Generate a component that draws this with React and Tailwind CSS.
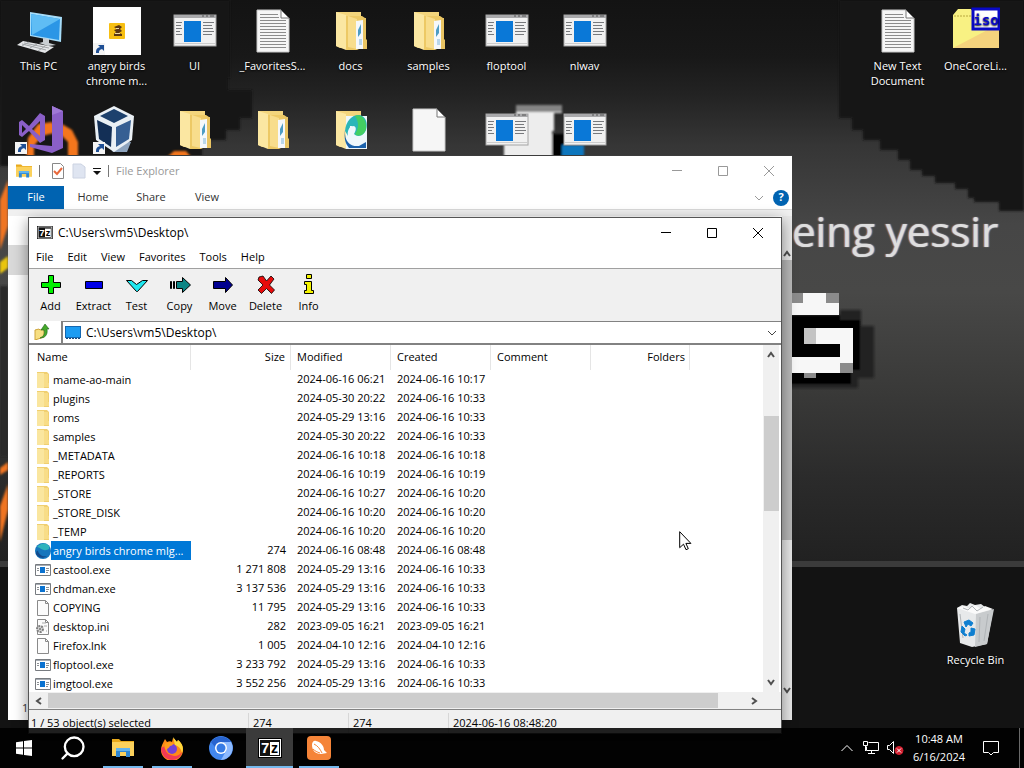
import React, { useState } from 'react';
import { Search } from 'lucide-react';

const desktopIcons = [
  { id: 'pc', label: 'This PC', kind: 'pc', x: 0, y: 7 },
  { id: 'angry', label: 'angry birds chrome m...', kind: 'game', x: 78, y: 7 },
  { id: 'ui', label: 'UI', kind: 'app', x: 156, y: 7 },
  { id: 'fav', label: '_FavoritesS...', kind: 'text', x: 234, y: 7 },
  { id: 'docs', label: 'docs', kind: 'folder', x: 312, y: 7 },
  { id: 'samples', label: 'samples', kind: 'folder', x: 390, y: 7 },
  { id: 'floptool', label: 'floptool', kind: 'app', x: 468, y: 7 },
  { id: 'nlwav', label: 'nlwav', kind: 'app', x: 546, y: 7 },
  { id: 'newtext', label: 'New Text Document', kind: 'text', x: 859, y: 7 },
  { id: 'onecore', label: 'OneCoreLi...', kind: 'iso', x: 937, y: 7 },
  { id: 'vs', kind: 'vs', x: 0, y: 106 },
  { id: 'vbox', kind: 'vbox', x: 78, y: 106 },
  { id: 'folder1', kind: 'folder', x: 156, y: 106 },
  { id: 'folder2', kind: 'folder', x: 234, y: 106 },
  { id: 'edge', kind: 'edgeFolder', x: 312, y: 106 },
  { id: 'blank', kind: 'blank', x: 390, y: 106 },
  { id: 'app1', kind: 'app', x: 468, y: 106 },
  { id: 'app2', kind: 'app', x: 546, y: 106 },
  { id: 'bin', label: 'Recycle Bin', kind: 'bin', x: 937, y: 601 },
];

const files = [
  { name: 'mame-ao-main', icon: 'folder', size: '', modified: '2024-06-16 06:21', created: '2024-06-16 10:17' },
  { name: 'plugins', icon: 'folder', size: '', modified: '2024-05-30 20:22', created: '2024-06-16 10:33' },
  { name: 'roms', icon: 'folder', size: '', modified: '2024-05-29 13:16', created: '2024-06-16 10:33' },
  { name: 'samples', icon: 'folder', size: '', modified: '2024-05-30 20:22', created: '2024-06-16 10:33' },
  { name: '_METADATA', icon: 'folder', size: '', modified: '2024-06-16 10:18', created: '2024-06-16 10:18' },
  { name: '_REPORTS', icon: 'folder', size: '', modified: '2024-06-16 10:19', created: '2024-06-16 10:19' },
  { name: '_STORE', icon: 'folder', size: '', modified: '2024-06-16 10:27', created: '2024-06-16 10:20' },
  { name: '_STORE_DISK', icon: 'folder', size: '', modified: '2024-06-16 10:20', created: '2024-06-16 10:20' },
  { name: '_TEMP', icon: 'folder', size: '', modified: '2024-06-16 10:20', created: '2024-06-16 10:20' },
  { name: 'angry birds chrome mlg...', icon: 'edge', size: '274', modified: '2024-06-16 08:48', created: '2024-06-16 08:48' },
  { name: 'castool.exe', icon: 'exe', size: '1 271 808', modified: '2024-05-29 13:16', created: '2024-06-16 10:33' },
  { name: 'chdman.exe', icon: 'exe', size: '3 137 536', modified: '2024-05-29 13:16', created: '2024-06-16 10:33' },
  { name: 'COPYING', icon: 'file', size: '11 795', modified: '2024-05-29 13:16', created: '2024-06-16 10:33' },
  { name: 'desktop.ini', icon: 'ini', size: '282', modified: '2023-09-05 16:21', created: '2023-09-05 16:21' },
  { name: 'Firefox.lnk', icon: 'file', size: '1 005', modified: '2024-04-10 12:16', created: '2024-04-10 12:16' },
  { name: 'floptool.exe', icon: 'exe', size: '3 233 792', modified: '2024-05-29 13:16', created: '2024-06-16 10:33' },
  { name: 'imgtool.exe', icon: 'exe', size: '3 552 256', modified: '2024-05-29 13:16', created: '2024-06-16 10:33' },
];

const tools = ['Add', 'Extract', 'Test', 'Copy', 'Move', 'Delete', 'Info'];

// ---------- icons ----------

const ShortcutArrow = () => (
  <g>
    <rect x="0" y="36" width="12" height="12" fill="#f4f4f4" />
    <path d="M3 46c0-4 1-5 4-6l-2-2h6v6l-2-2c-3 1-3 2-3 4z" fill="#1f4f94" />
  </g>
);

const FolderShape = () => (
  <g>
    <path d="M9 5h25v36H13l-4-2z" fill="#f3d57c" />
    <path d="M9 5l10 3v35l-10-4z" fill="#fbe7a2" />
    <path d="M19 9h16l3 2v28l-8 4H19z" fill="#edc965" />
    <path d="M21 9l9 3v30l-9-2z" fill="#f8dd8c" />
    <path d="M29 14l7-1v29h-7z" fill="#f5f8fb" />
    <path d="M31 23l3-6v9l-3 4z" fill="#4d9cc4" />
    <path d="M32 32h3v6h-3z" fill="#b9d6ea" />
    <path d="M36 11h3v21l1 1v9h-4z" fill="#e9c463" />
  </g>
);

const DesktopGlyph = ({ kind }) => (
  <svg viewBox="0 0 48 48" className="size-12 shrink-0" aria-hidden="true">
    {kind === 'pc' && (
      <g>
        <path d="M15 5l32 5-1 25-31-6z" fill="#a6dcf8" />
        <path d="M16 7l29 5-1 21-28-5z" fill="#2b96e6" />
        <path d="M16 7l29 5-28 16z" fill="#5fbdf4" />
        <path d="M28 31l6 1v4l7 2-8 1-9-3 4-1z" fill="#c9ced2" />
        <path d="M8 34l31 6-9 6-28-8z" fill="#e4e6e8" />
        <path d="M9 36l25 5M7 37l24 6M14 35l-7 4M22 37l-7 4M30 39l-7 5" stroke="#a2a6a9" fill="none" />
      </g>
    )}
    {kind === 'game' && (
      <g>
        <rect width="48" height="48" fill="#fff" />
        <rect x="16" y="16" width="16" height="16" rx="1" fill="#f7bf12" />
        <path d="M21 20l5-2 3 2-2 2 2 2-3 2 3 1v2h-8v-2l2-2-2-2 3-1z" fill="#5a3612" />
        <path d="M23 21h3v1h-3zM22 26h5v1h-5z" fill="#f0d9a6" />
        <ShortcutArrow />
      </g>
    )}
    {kind === 'app' && (
      <g>
        <rect x="3" y="8" width="42" height="31" fill="#f1f1f1" stroke="#a4a4a4" />
        <rect x="3" y="8" width="42" height="3" fill="#a9a9ab" />
        <path d="M31 9h2M35 9h2M39 9h4" stroke="#555" />
        <rect x="13" y="14" width="17" height="21" fill="#0a78d7" />
        <path d="M5 15.500h6M5 18.500h5M5 21.500h6M5 24.500h4M5 27.500h6M32 15.500h11M32 18.500h9M32 21.500h10M32 24.500h11M32 27.500h9" stroke="#77797c" />
        <path d="M4 36.500h40" stroke="#cdcdcd" />
      </g>
    )}
    {(kind === 'text' || kind === 'blank') && (
      <g>
        <path d="M8 3h24l8 8v34H8z" fill="#f6f6f6" stroke="#c8c8c8" />
        <path d="M32 3v8h8z" fill="#fff" stroke="#777" />
        {kind === 'text' && (
          <path
            d="M11 7.500h18M11 10.500h19M11 13.500h26M11 16.500h26M11 19.500h26M11 22.500h26M11 25.500h26M11 28.500h26M11 31.500h26M11 34.500h26M11 37.500h26M11 40.500h26"
            stroke="#8c8c8c"
          />
        )}
      </g>
    )}
    {kind === 'folder' && <FolderShape />}
    {kind === 'edgeFolder' && (
      <g>
        <path d="M9 5h25v36H13l-4-2z" fill="#f3d57c" />
        <path d="M9 5l10 3v35l-10-4z" fill="#fbe7a2" />
        <path d="M19 10h21v33H19z" fill="#eef7fb" />
        <path d="M18 25c1-11 8-17 15-16 6 2 8 8 6 15-3 7-9 7-12 4 3-5 2-8-1-8-4 1-6 5-5 10z" fill="#2ab6b8" />
        <path d="M28 10c7-3 12 5 11 13-2 7-8 8-11 5 4-6 4-12 0-18z" fill="#43cf62" />
        <path d="M18 24c-1 12 6 17 14 16l7-4v6H22c-4-5-5-10-4-18z" fill="#1b62ac" />
        <path d="M22 30c2 5 6 7 11 6M24 20l-1 8" stroke="#eef7fb" strokeWidth="2" fill="none" />
      </g>
    )}
    {kind === 'iso' && (
      <g>
        <path d="M1 8l5-6h13l2 3h26v36H1z" fill="#f8f183" />
        <path d="M1 41l46-24v24z" fill="#f5d37d" />
        <path d="M2 9h18" stroke="#b8a83f" strokeDasharray="2 1" />
        <rect x="21" y="2" width="26" height="20" fill="#fff" stroke="#0909c6" strokeWidth="3" />
        <text x="34" y="18" textAnchor="middle" fontFamily="DejaVu Sans Mono, monospace" fontWeight="700" fontSize="14" fill="#0909c6">
          iso
        </text>
      </g>
    )}
    {kind === 'vs' && (
      <g>
        <path d="M37 0l11 5v37l-11 5-22-6v-3l22 2z" fill="#8a5fc7" />
        <path d="M37 0l11 5-11 4z" fill="#9f78d6" />
        <path
          d="M4 16l3-2 7 6L25 7l5 3v24l-5 3-11-12-7 6-3-2zM7 19v8l4-4zM25 15l-8 8 8 7z"
          fillRule="evenodd"
          fill="#8a5fc7"
        />
        <ShortcutArrow />
      </g>
    )}
    {kind === 'vbox' && (
      <g>
        <path d="M14 37l24-1-4 10H20z" fill="#8ea4be" />
        <path d="M21 0l20 10-2 24-18 12L3 34 1 10z" fill="#eaf0f5" />
        <path d="M21 3l14 7-14 7-14-7z" fill="#1d416d" />
        <path d="M4 14l15 7-1 20-12-8z" fill="#132f56" />
        <path d="M38 14l-15 7v20l13-8z" fill="#365f93" />
        <ShortcutArrow />
      </g>
    )}
    {kind === 'bin' && (
      <g>
        <path d="M5 7l5-3 5 1 3-3 5 2 6-1 4 3 8 3-6 34-15 3-12-4z" fill="#e7e9ea" />
        <path d="M24 13l18-5-7 35-12 3z" fill="#c8cbcd" />
        <path d="M5 7l18 6 18-5-8-3-4 3-6-4-5 4-6-3z" fill="#fafafa" />
        <path d="M11 7l5 2 4-4 5 5 6-4M8 13l3 24M28 16l-1 25M36 13l-4 27" stroke="#b0b4b7" fill="none" />
        <path d="M12 21l5-2 4 3-2 3-3-2-2 3zM10 25l3 3-1 4 3 2-2 1-4-4zM19 27l4 1-1 6-5 1v-3l2-1z" fill="#0f7fd0" stroke="#0f7fd0" />
      </g>
    )}
  </svg>
);

const FileGlyph = ({ kind }) => (
  <svg viewBox="0 0 16 16" className="size-4 shrink-0" aria-hidden="true">
    {kind === 'folder' && (
      <g>
        <path d="M2 0h10l2 2v14H2z" fill="#f0cf70" />
        <path d="M2 1h7v15H2z" fill="#fae69f" />
        <path d="M9 2h4v9h1v4H9z" fill="#f8dd88" />
      </g>
    )}
    {kind === 'edge' && (
      <g>
        <circle cx="8" cy="8" r="8" fill="#1676bd" />
        <path d="M2 4c3-4 9-5 12-1 1 2 0 4-3 4-3 1-5-2-9-3z" fill="#2fb3bd" />
        <path d="M3 8c1 4 5 6 9 5-4 3-9 2-11-2 0-2 1-4 2-3z" fill="#124b8d" />
      </g>
    )}
    {kind === 'exe' && (
      <g>
        <path d="M.5 2.500h15v11H.5z" fill="#fff" stroke="#777b80" />
        <path d="M1 3h14v1H1z" fill="#a5abb2" />
        <path d="M5 5h5v6H5z" fill="#0a72d0" />
        <path d="M2 6.500h2M2 8.500h2M11 6.500h3M11 8.500h3M11 10.500h2" stroke="#8b8f93" />
      </g>
    )}
    {(kind === 'file' || kind === 'ini') && (
      <g>
        <path d="M2.500.5h8l3 3v12h-11z" fill="#fcfcfc" stroke="#8a8a8a" />
        <path d="M10.500.5v3h3" fill="none" stroke="#8a8a8a" />
      </g>
    )}
    {kind === 'ini' && (
      <g>
        <path d="M7 4h4M9 7h3M11 12h1" stroke="#aaa" />
        <circle cx="5" cy="10" r="3" fill="#d5d5d5" stroke="#7f7f7f" strokeWidth="2" strokeDasharray="2 1" />
        <circle cx="5" cy="10" r="1" fill="#777" />
      </g>
    )}
  </svg>
);

const ToolGlyph = ({ name }) => (
  <svg viewBox="0 0 24 24" className="size-6" aria-hidden="true" stroke="#000">
    {name === 'Add' && <path d="M9.500 2.500h5v7h7v5h-7v6h-5v-6h-7v-5h7z" fill="#00f000" />}
    {name === 'Extract' && <path d="M3.500 8.500h17v7h-17z" fill="#0000e8" />}
    {name === 'Test' && <path d="M1.500 7.500h5l5 4 6-4h5l-10 11h-1z" fill="#1fe8f0" />}
    {name === 'Copy' && <path d="M2.500 8.500h1v7h-1zM5.500 8.500h1v7h-1zM8.500 8.500h6v-4l8 7.500-8 7.500v-4h-6z" fill="#0b8585" />}
    {name === 'Move' && <path d="M2.500 8.500h12v-4l7 7.500-7 7.500v-4h-12z" fill="#000090" />}
    {name === 'Delete' && (
      <path d="M5 4l4-1 3.500 5L17 3l3 3-4.500 6 5 5-3 3.500-5-5-5 5L4 17l5-5-5-5z" fill="#e80c0c" strokeWidth=".8" />
    )}
    {name === 'Info' && (
      <path d="M9.500 1.500h5v4h-5zM7.500 8.500h7v9h2v3h-9v-3h2v-6h-2z" fill="#f4f400" />
    )}
  </svg>
);

const SevenZip = ({ className }) => (
  <svg viewBox="0 0 24 20" className={className} aria-hidden="true">
    <rect x=".5" y=".5" width="23" height="19" fill="#111" stroke="#000" />
    <rect x="1.500" y="1.500" width="21" height="17" fill="none" stroke="#fff" />
    <rect x="12" y="4" width="9" height="13" fill="#fff" />
    <text x="3" y="15" fontFamily="Liberation Sans, sans-serif" fontWeight="700" fontSize="15" fill="#fff">7</text>
    <text x="13" y="15" fontFamily="Liberation Sans, sans-serif" fontWeight="700" fontSize="14" fill="#000">z</text>
  </svg>
);

const ExplorerGlyph = ({ className }) => (
  <svg viewBox="0 0 22 18" className={className} aria-hidden="true">
    <path d="M0 0h7l2 2h13v3H0z" fill="#e8a91c" />
    <path d="M0 3h22v14H0z" fill="#fbd15c" />
    <path d="M4 18V9h14v9h-4v-5H8v5z" fill="#2f87d2" />
    <path d="M4 9h14v3H4z" fill="#62b4ee" />
  </svg>
);

const Chevron = ({ dir, thin }) => {
  const paths = {
    up: 'M3 8l3-4 3 4',
    down: 'M3 4l3 4 3-4',
    left: 'M8 3L4 6l4 3',
    right: 'M4 3l4 3-4 3',
  };
  return (
    <svg viewBox="0 0 12 12" className="size-3" fill="none" stroke="currentColor" strokeWidth={thin ? 1 : 2} aria-hidden="true">
      <path d={thin ? 'M2 4l4 4 4-4' : paths[dir]} />
    </svg>
  );
};

const WindowButtons = ({ muted }) => (
  <div className={`flex h-full ${muted ? 'text-[#999999]' : 'text-black'}`}>
    {['M1 5.500h10', 'M1.500 1.500h9v9h-9z', 'M1 1l10 10M11 1L1 11'].map((d, i) => (
      <button key={i} aria-label={['Minimize', 'Maximize', 'Close'][i]} className="flex w-[46px] items-center justify-center">
        <svg viewBox="0 0 12 12" className="size-3" fill="none" stroke="currentColor">
          <path d={d} />
        </svg>
      </button>
    ))}
  </div>
);

// ---------- wallpaper ----------

const Wallpaper = () => (
  <div className="absolute inset-0 overflow-hidden bg-[#131313]">
    <svg viewBox="0 0 1024 768" preserveAspectRatio="none" className="h-full w-full" aria-hidden="true">
      <defs>
        <linearGradient id="haze" x1="0" y1="0" x2="0" y2="1">
          <stop offset="0" stopColor="#131313" />
          <stop offset=".1" stopColor="#181818" />
          <stop offset=".17" stopColor="#232323" />
          <stop offset=".26" stopColor="#363636" />
          <stop offset=".4" stopColor="#464646" />
          <stop offset=".52" stopColor="#484847" />
          <stop offset=".7" stopColor="#393938" />
          <stop offset=".85" stopColor="#2b2b2b" />
          <stop offset="1" stopColor="#212121" />
        </linearGradient>
        <filter id="soft">
          <feGaussianBlur stdDeviation="1" />
        </filter>
      </defs>
      <rect width="1024" height="562" fill="url(#haze)" />
      <path
        d="M839 60V118h13v12h11v10h17v10h18v10h12v10h12v6h13v7h20v6h13v9h6v4h25v9h25V0H839z"
        fill="#131313"
        filter="url(#soft)"
      />
      <path d="M0 0h230v78h-2v12h24v28h-12v12h-14v10h-24v26H0z" fill="#131313" filter="url(#soft)" />
      <rect y="561" width="1024" height="6" fill="#3b3b3b" />
      <rect y="567" width="1024" height="201" fill="#131313" />
      <path d="M26 160l2-22 10-14 14-2 6 10-16 4-8 10v14zM62 124l10 6 6 12v16H68v-16l-8-8zM166 158l8-7h12l6 7z" fill="#f4761e" filter="url(#soft)" />
      <g filter="url(#soft)">
        <path d="M0 200l8-20v46l-8 24zM0 468l8-6v8l-8 5zM0 506l8-22v26l-8 32z" fill="#ef7420" />
        <path d="M0 262l8-6v12l-8 6z" fill="#e9c511" />
        <path d="M0 286h8v170H0z" fill="#2a2a2a" />
        <path d="M516 105h46v8h-8v18h-2v30h-48v-25h12z" fill="#ededed" />
        <path d="M516 105h46v7h-46z" fill="#858585" />
        <path d="M552 134h12v24h-12z" fill="#000" />
        <path d="M562 145h22v14h-22z" fill="#0876bd" />
        <path d="M840 310h21v16h13v52h-16v10h-78v-12h60z" fill="#242424" />
        <path d="M780 315h60v5h20v50h-9v14h-71z" fill="#030303" />
      </g>
      <path d="M780 293h59v22h-59zM804 328h49v45h-73v-16h60v-13h-36z" fill="#f7f7f7" />
      <path d="M780 293h23v10h-23zM826 293h13v10h-13zM840 363h13v10h-13zM804 373h12v5h-12z" fill="#8b8b8b" />
      <path d="M804 328h12v16h-12z" fill="#c4c4c4" />
    </svg>
    <p className="absolute top-[202px] left-[792px] font-['Open_Sans',sans-serif] text-[42px] leading-[58px] whitespace-nowrap text-[#dedede] [text-shadow:1px_0_1px_#8fa9c4,-1px_0_1px_#b98f68]">
      eing yessir
    </p>
  </div>
);

// ---------- windows ----------

const ExplorerWindow = () => (
  <section className="absolute top-[155px] bottom-12 left-2 flex w-[784px] flex-col border-t border-[#3c3c3c] bg-white text-[11px] text-[#333333]">
    <header className="flex h-[30px] shrink-0 items-center justify-between">
      <div className="flex items-center gap-[7px] pl-2">
        <ExplorerGlyph className="h-[14px] w-4" />
        <span className="h-3 w-px bg-[#777777]" />
        <svg viewBox="0 0 14 16" className="ml-1 h-4 w-[14px]" fill="none" aria-hidden="true">
          <path d="M1.500.5h8l3 3v12h-11z" stroke="#888" />
          <path d="M3 8l3 3 5-6" stroke="#e8693c" strokeWidth="2" />
        </svg>
        <svg viewBox="0 0 14 16" className="h-4 w-[14px]" aria-hidden="true">
          <path d="M1 1h8l4 3v11H1z" fill="#dfe5f1" stroke="#ccd3e2" />
        </svg>
        <svg viewBox="0 0 8 8" className="size-2" aria-hidden="true">
          <path d="M0 1h8v1H0zM0 4h8L4 8z" fill="#111" />
        </svg>
        <span className="h-3 w-px bg-[#777777]" />
        <h2 className="text-[#999999]">File Explorer</h2>
      </div>
      <WindowButtons muted />
    </header>
    <nav className="flex h-6 shrink-0 items-stretch border-b border-[#d9d9d9]">
      <button className="w-14 bg-[#0063b1] text-white">File</button>
      <button className="w-[58px]">Home</button>
      <button className="w-[58px]">Share</button>
      <button className="w-[54px]">View</button>
      <div className="ml-auto flex items-center gap-2 pr-[3px] text-[#999999]">
        <Chevron thin />
        <button aria-label="Help" className="flex size-4 items-center justify-center rounded-full bg-[#0063b1] text-[11px] font-bold text-white">
          ?
        </button>
      </div>
    </nav>
    <div className="flex min-h-0 flex-1 justify-between border-t-6 border-[#f0f0f0]">
      <div className="flex w-5 flex-col justify-between">
        <div className="mt-[29px] h-[30px] bg-[#d9d9d9]" />
        <p className="h-5 pl-[14px]">1</p>
      </div>
      <div className="flex w-[10px] flex-col items-center bg-[#e9e9e9] pt-8 pb-6 text-[#505050]">
        <Chevron dir="up" />
        <div className="h-[280px] w-full bg-[#b9b9b9]" />
        <div className="mt-auto">
          <Chevron dir="down" />
        </div>
      </div>
    </div>
  </section>
);

const SevenZipWindow = () => {
  const [selected, setSelected] = useState('angry birds chrome mlg...');

  return (
    <section className="absolute top-[217px] bottom-[34px] left-7 flex w-[754px] flex-col border border-[#555555] bg-white text-[11px] text-black shadow-[0_4px_14px_rgba(0,0,0,0.45)]">
      <header className="flex h-[29px] shrink-0 items-center justify-between">
        <div className="flex items-center gap-[5px] pl-2">
          <SevenZip className="h-[13px] w-4" />
          <h1 className="text-[12px]">C:\Users\vm5\Desktop\</h1>
        </div>
        <WindowButtons />
      </header>

      <nav className="flex h-[22px] shrink-0 items-center border-b border-[#a0a0a0]">
        {['File', 'Edit', 'View', 'Favorites', 'Tools', 'Help'].map((item) => (
          <button key={item} className="px-[7px]">{item}</button>
        ))}
      </nav>

      <div className="flex h-[52px] shrink-0 bg-[#f0f0f0]">
        {tools.map((name) => (
          <button key={name} className="flex w-[43px] flex-col items-center pt-1 leading-[18px]">
            <ToolGlyph name={name} />
            {name}
          </button>
        ))}
      </div>

      <div className="flex h-6 shrink-0 items-stretch border-b-2 border-[#828282]">
        <button aria-label="Up one level" className="flex w-8 items-center pl-[5px]">
          <svg viewBox="0 0 16 16" className="size-4">
            <path d="M1 6l4-1 1 1 4-1v8l-9 3z" fill="#f7df82" stroke="#cda43a" />
            <path d="M6 14c4-2 5-4 4-8H7l4-6 4 5h-2c1 6-2 9-7 9z" fill="#45a82a" stroke="#1e651a" strokeWidth=".6" />
          </svg>
        </button>
        <div className="relative flex flex-1 items-center border-t border-l-2 border-[#828282] pl-[2px]">
          <svg viewBox="0 0 16 13" className="h-[13px] w-4" aria-hidden="true">
            <rect x=".5" y=".5" width="15" height="11" fill="#1c9cf2" stroke="#1467b0" />
            <path d="M1 12.500h14" stroke="#174a7a" strokeDasharray="2 1" />
          </svg>
          <select aria-label="Folder path" className="h-full flex-1 appearance-none pl-[5px] text-[12px]">
            <option>C:\Users\vm5\Desktop\</option>
          </select>
          <span className="pointer-events-none absolute right-[3px] text-[#444444]">
            <Chevron thin />
          </span>
        </div>
      </div>

      <div className="flex min-h-0 flex-1">
        <div className="min-w-0 flex-1 overflow-hidden">
          <table className="w-[661px] table-fixed border-separate border-spacing-0 whitespace-nowrap">
            <thead>
              <tr className="h-[25px]">
                <th className="w-[162px] border-r border-[#e5e5e5] p-0 pl-2 text-left font-normal">Name</th>
                <th className="w-[100px] border-r border-[#e5e5e5] p-0 pr-[5px] text-right font-normal">Size</th>
                <th className="w-[100px] border-r border-[#e5e5e5] p-0 pl-[6px] text-left font-normal">Modified</th>
                <th className="w-[100px] border-r border-[#e5e5e5] p-0 pl-[6px] text-left font-normal">Created</th>
                <th className="w-[100px] border-r border-[#e5e5e5] p-0 pl-[6px] text-left font-normal">Comment</th>
                <th className="border-r border-[#e5e5e5] p-0 pr-1 text-right font-normal">Folders</th>
              </tr>
            </thead>
            <tbody>
              {files.map((f) => (
                <tr key={f.name} className="h-[19px]" onClick={() => setSelected(f.name)}>
                  <td className="p-0 pl-[6px]">
                    <div className="flex h-[19px] items-center">
                      <FileGlyph kind={f.icon} />
                      <span className={`pl-[2px] leading-[19px] ${selected === f.name ? 'flex-1 bg-[#0078d7] text-white' : ''}`}>
                        {f.name}
                      </span>
                    </div>
                  </td>
                  <td className="p-0 pr-[5px] text-right">{f.size}</td>
                  <td className="p-0 pl-[6px]">{f.modified}</td>
                  <td className="p-0 pl-[6px]">{f.created}</td>
                  <td />
                  <td />
                </tr>
              ))}
            </tbody>
          </table>
        </div>
        <div className="mr-[2px] flex w-4 flex-col items-center bg-[#f0f0f0] py-1 text-[#505050]">
          <Chevron dir="up" />
          <div className="mt-[55px] h-[95px] w-[15px] bg-[#cdcdcd]" />
          <div className="mt-auto">
            <Chevron dir="down" />
          </div>
        </div>
      </div>

      <div className="flex h-[17px] shrink-0 items-center bg-[#f0f0f0] pr-[21px] pl-1 text-[#505050]">
        <Chevron dir="left" />
        <div className="mr-[30px] ml-[3px] h-[15px] flex-1 bg-[#cdcdcd]" />
        <Chevron dir="right" />
      </div>

      <footer className="flex h-6 shrink-0 items-center border-t border-[#828282] bg-[#f0f0f0] pt-0.5 leading-5">
        <span className="w-[219px] pl-[2px]">1 / 53 object(s) selected</span>
        <span className="w-[100px] border-l border-[#d7d7d7] pl-1">274</span>
        <span className="w-[100px] border-l border-[#d7d7d7] pl-1">274</span>
        <span className="flex-1 border-l border-[#d7d7d7] pl-1">2024-06-16 08:48:20</span>
      </footer>
    </section>
  );
};

// ---------- taskbar ----------

const Taskbar = () => (
  <footer className="absolute inset-x-0 bottom-0 flex h-10 items-stretch justify-between bg-black/87 text-white">
    <div className="flex">
      <button aria-label="Start" className="flex w-12 items-center justify-center">
        <svg viewBox="0 0 16 16" className="size-4" fill="#fff">
          <path d="M0 2.300l7-1v6.200H0zM8 1.100L16 0v7.500H8zM0 8.500h7v6.200l-7-1zM8 8.500h8V16l-8-1.100z" />
        </svg>
      </button>
      <button aria-label="Search" className="flex w-[50px] items-center justify-center">
        <Search className="size-7 -scale-x-100" strokeWidth={2} />
      </button>
      <button aria-label="File Explorer" className="flex w-[49px] items-center justify-center">
        <span className="flex h-full w-10 items-center justify-center border-y-2 border-t-transparent border-b-[#76b9ed]">
          <ExplorerGlyph className="h-[18px] w-[22px]" />
        </span>
      </button>
      <button aria-label="Firefox" className="flex w-[49px] items-center justify-center">
        <span className="flex h-full w-10 items-center justify-center border-y-2 border-t-transparent border-b-[#76b9ed]">
          <svg viewBox="0 0 24 24" className="size-6">
            <path d="M3 7l2-4 2 3c2-1 4-1 5 0l1-4 4 4 1-2c4 3 5 7 5 10a11 11 0 0 1-22 0c0-3 1-5 2-7z" fill="#ff8b16" />
            <path d="M13 1l4 5 1-2c5 4 6 9 4 13-1-5-4-7-7-8z" fill="#ffd83b" />
            <path d="M1 12c0 7 5 12 11 12 5 0 9-3 10-8-3 4-7 5-11 3-4-1-6-4-6-9z" fill="#f23a55" />
            <circle cx="12" cy="13" r="5" fill="#7542d6" />
            <path d="M5 8c2-2 5-2 7-1 2 0 1 3-2 3-1 2-2 2-4 4-2-2-2-4-1-6z" fill="#ff9d1a" />
          </svg>
        </span>
      </button>
      <button aria-label="Chromium" className="flex w-[50px] items-center justify-center">
        <svg viewBox="0 0 24 24" className="size-6">
          <circle cx="12" cy="12" r="12" fill="#4287ee" />
          <path d="M2 6a12 12 0 0 1 20 0H12a6 6 0 0 0-6 5z" fill="#2864cf" />
          <path d="M22 6a12 12 0 0 1-10 18l5-9c2-3 0-7-4-9z" fill="#8dbaff" />
          <circle cx="12" cy="12" r="6" fill="#fff" />
          <circle cx="12" cy="12" r="4.500" fill="#367be5" />
        </svg>
      </button>
      <button aria-label="7-Zip File Manager" className="flex w-[47px] items-center justify-center border-y-2 border-t-[#3b3b3b] border-b-[#76b9ed] bg-[#3b3b3b]">
        <SevenZip className="h-5 w-6" />
      </button>
      <button aria-label="Browser" className="flex w-[52px] items-center justify-center">
        <span className="flex h-full w-10 items-center justify-center border-y-2 border-t-transparent border-b-[#76b9ed]">
          <svg viewBox="0 0 24 24" className="size-6">
            <rect width="24" height="24" rx="4" fill="#f58438" />
            <path d="M5 9c0-3 2-5 4-4 5 1 8 5 8 9l3 3-6 1C8 18 5 14 5 9z" fill="#fff" />
            <path d="M7 8c4 2 6 5 8 9M6 13c2 2 4 3 7 4" stroke="#f58438" fill="none" />
          </svg>
        </span>
      </button>
    </div>
    <div className="flex items-center">
      <button aria-label="Show hidden icons" className="flex w-6 justify-center">
        <svg viewBox="0 0 12 8" className="h-2 w-3" fill="none" stroke="#fff">
          <path d="M.5 7L6 1.500 11.500 7" />
        </svg>
      </button>
      <button aria-label="Network" className="flex w-6 justify-center">
        <svg viewBox="0 0 16 14" className="h-[14px] w-4" fill="none" stroke="#fff">
          <path d="M5.500 1.500h10v8H3.500v-4M8.500 10v3M5 12.500h7M.5.5h4v4h-4zM2.500 5v5" />
        </svg>
      </button>
      <button aria-label="Volume muted" className="flex w-6 justify-center">
        <svg viewBox="0 0 17 14" className="h-[14px] w-[17px]" fill="none" stroke="#fff">
          <path d="M.5 4.500h2l4-4v12l-4-4h-2z" />
          <circle cx="12" cy="9.500" r="4" fill="#d32030" stroke="#d32030" />
          <path d="M10 7.500l4 4M14 7.500l-4 4" />
        </svg>
      </button>
      <time className="w-16 text-center text-[11px] leading-[18px]">
        10:48 AM
        <br />
        6/16/2024
      </time>
      <button aria-label="Notifications" className="flex w-10 justify-center">
        <svg viewBox="0 0 18 18" className="size-[18px]" fill="none" stroke="#fff">
          <path d="M1.500 2.500h15v11h-5l-2.500 2.500-2.500-2.500h-5z" />
        </svg>
      </button>
      <span className="ml-2 mr-1 h-10 w-px bg-[#6a6a6a]" />
    </div>
  </footer>
);

const App = () => {
  return (
    <main className="relative h-screen w-full overflow-hidden font-['Open_Sans','Noto_Sans',sans-serif]">
      <Wallpaper />

      {desktopIcons.map((item) => (
        <button
          key={item.id}
          aria-label={item.label || item.kind}
          className="absolute flex w-[77px] flex-col items-center text-[11px] leading-[15px] text-white [text-shadow:0_1px_2px_#000]"
          style={{ left: item.x, top: item.y }}
        >
          <DesktopGlyph kind={item.kind} />
          {item.label && <span className="mt-[3px]">{item.label}</span>}
        </button>
      ))}

      <ExplorerWindow />
      <SevenZipWindow />
      <Taskbar />

      {/* mouse pointer */}
      <svg viewBox="0 0 13 20" className="pointer-events-none absolute top-[531px] left-[679px] h-5 w-[13px]" aria-hidden="true">
        <path d="M.7.700v16l3.800-3.500 2.500 5.500 2.300-1-2.400-5.300h5z" fill="#fff" stroke="#000" />
      </svg>
    </main>
  );
};

export default App;
